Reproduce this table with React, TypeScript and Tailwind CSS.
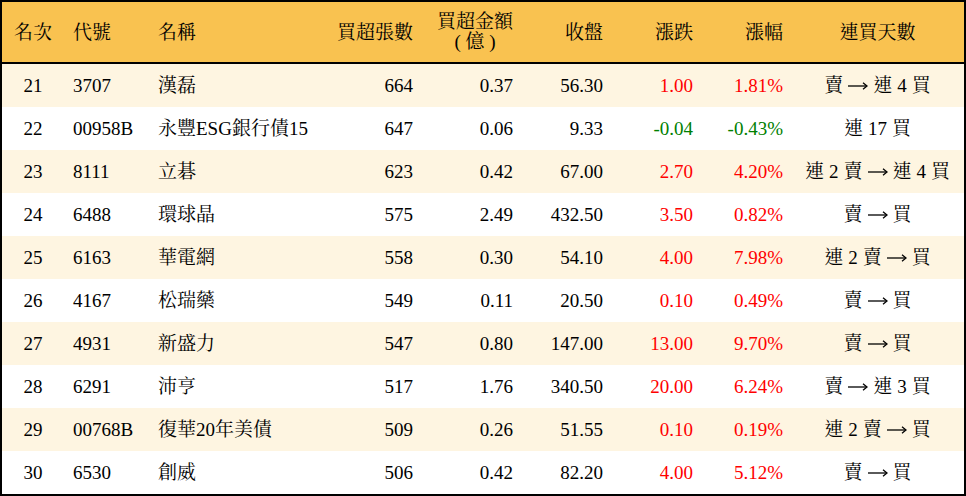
type Row = {
  rank: number
  code: string
  name: string
  shares: string
  amount: string
  close: string
  change: string
  pct: string
  streak: string
}

const rows: Row[] = [
  { rank: 21, code: "3707", name: "漢磊", shares: "664", amount: "0.37", close: "56.30", change: "1.00", pct: "1.81%", streak: "賣 → 連 4 買" },
  { rank: 22, code: "00958B", name: "永豐ESG銀行債15", shares: "647", amount: "0.06", close: "9.33", change: "-0.04", pct: "-0.43%", streak: "連 17 買" },
  { rank: 23, code: "8111", name: "立碁", shares: "623", amount: "0.42", close: "67.00", change: "2.70", pct: "4.20%", streak: "連 2 賣 → 連 4 買" },
  { rank: 24, code: "6488", name: "環球晶", shares: "575", amount: "2.49", close: "432.50", change: "3.50", pct: "0.82%", streak: "賣 → 買" },
  { rank: 25, code: "6163", name: "華電網", shares: "558", amount: "0.30", close: "54.10", change: "4.00", pct: "7.98%", streak: "連 2 賣 → 買" },
  { rank: 26, code: "4167", name: "松瑞藥", shares: "549", amount: "0.11", close: "20.50", change: "0.10", pct: "0.49%", streak: "賣 → 買" },
  { rank: 27, code: "4931", name: "新盛力", shares: "547", amount: "0.80", close: "147.00", change: "13.00", pct: "9.70%", streak: "賣 → 買" },
  { rank: 28, code: "6291", name: "沛亨", shares: "517", amount: "1.76", close: "340.50", change: "20.00", pct: "6.24%", streak: "賣 → 連 3 買" },
  { rank: 29, code: "00768B", name: "復華20年美債", shares: "509", amount: "0.26", close: "51.55", change: "0.10", pct: "0.19%", streak: "連 2 賣 → 買" },
  { rank: 30, code: "6530", name: "創威", shares: "506", amount: "0.42", close: "82.20", change: "4.00", pct: "5.12%", streak: "賣 → 買" },
]

const cols = "grid grid-cols-[62px_86px_180px_91px_100px_90px_90px_90px_173px]"

const tone = (v: string) => (v.startsWith("-") ? "text-[#008000]" : "text-[#ff0000]")

// long thin arrow, wider than the font's own glyph
const Arrow = () => (
  <span className="inline-flex items-center" aria-label="→">
    <svg width="20" height="10" viewBox="0 0 20 10" fill="none" stroke="black" strokeWidth="1.3">
      <path d="M0 5h18.5" />
      <path d="M15 1.8l4 3.2-4 3.2" />
    </svg>
  </span>
)

const Streak = ({ text }: { text: string }) => (
  <div className="flex items-center justify-center gap-[5px] whitespace-nowrap">
    {text.split(" ").map((t, i) => (t === "→" ? <Arrow key={i} /> : <span key={i}>{t}</span>))}
  </div>
)

export default function App() {
  return (
    <div className="w-[966px] h-[496px] border-2 border-black bg-white text-[19px] leading-none text-black font-['Liberation_Serif','Noto_Serif_CJK_TC','Noto_Sans_CJK_TC',serif]">
      <div className={`${cols} h-[62px] items-center border-b-2 border-black bg-[#f9c250]`}>
        <div className="text-center">名次</div>
        <div className="pl-[9px]">代號</div>
        <div className="pl-[8px]">名稱</div>
        <div className="pr-[8px] text-right">買超張數</div>
        <div className="pr-[8px] text-right">
          <div className="inline-block text-center leading-[20px]">
            <div>買超金額</div>
            <div className="whitespace-pre">( 億 )</div>
          </div>
        </div>
        <div className="pr-[8px] text-right">收盤</div>
        <div className="pr-[8px] text-right">漲跌</div>
        <div className="pr-[8px] text-right">漲幅</div>
        <div className="text-center">連買天數</div>
      </div>
      {rows.map((r, i) => (
        <div
          key={r.rank}
          className={`${cols} h-[43px] items-center ${i % 2 === 0 ? "bg-[#fef5e1]" : "bg-white"}`}
        >
          <div className="text-center">{r.rank}</div>
          <div className="pl-[9px]">{r.code}</div>
          <div className="pl-[8px]">{r.name}</div>
          <div className="pr-[8px] text-right">{r.shares}</div>
          <div className="pr-[8px] text-right">{r.amount}</div>
          <div className="pr-[8px] text-right">{r.close}</div>
          <div className={`pr-[8px] text-right ${tone(r.change)}`}>{r.change}</div>
          <div className={`pr-[8px] text-right ${tone(r.pct)}`}>{r.pct}</div>
          <Streak text={r.streak} />
        </div>
      ))}
    </div>
  )
}
